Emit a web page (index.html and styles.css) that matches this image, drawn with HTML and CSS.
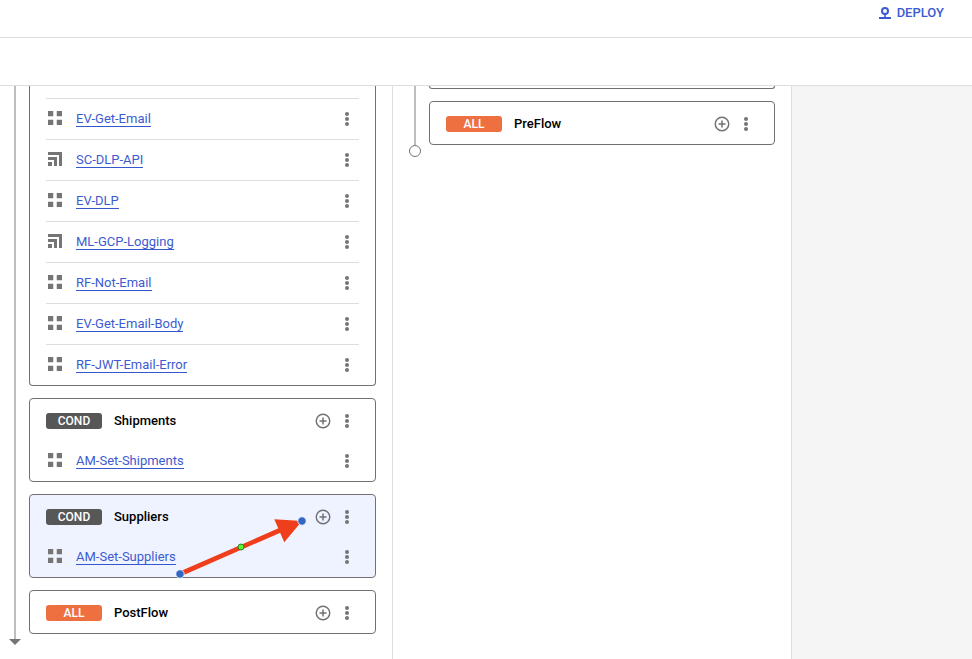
FILE: index.html
```html
<!DOCTYPE html>
<html lang="en">
<head>
<meta charset="utf-8">
<title>Proxy flows</title>
<link rel="stylesheet" href="styles.css">
</head>
<body>
<svg class="defs" aria-hidden="true">
  <symbol id="grid" viewBox="0 0 14 14"><path d="M0 0h5.250v5.250H0zM8.750 0H14v5.250H8.750zM0 8.750h5.250V14H0zM8.750 8.750H14V14H8.750z"/></symbol>
  <symbol id="callout" viewBox="0 0 14 14"><path d="M0 0h14v14h-3V3H0zM0 5h9v9H6V8H0zM0 10h4v4H0z"/></symbol>
  <symbol id="more" viewBox="0 0 6 14"><circle cx="3" cy="2" r="2"/><circle cx="3" cy="7" r="2"/><circle cx="3" cy="12" r="2"/></symbol>
  <symbol id="add" viewBox="0 0 16 16"><circle cx="8" cy="8" r="6.750" fill="none" stroke="currentColor" stroke-width="1.450"/><path d="M7.250 4.500h1.500v2.750h2.750v1.500H8.750v2.750h-1.500V8.750H4.500v-1.500h2.750z"/></symbol>
</svg>
<header class="topbar">
  <a class="deploy"><svg class="deploy-icon" viewBox="0 0 12 12"><circle cx="6" cy="4" r="3" fill="none" stroke="currentColor" stroke-width="2"/><path d="M5.200 7h1.600v3H12v2H0v-2h5.200z"/></svg>DEPLOY</a>
</header>
<div class="toolbar"></div>
<main class="canvas">
  <section class="column column-left">
    <div class="rail rail-down"></div>
    <div class="flows">
      <article class="card card-clipped">
        <div class="step"><svg class="kind"><use href="#grid"/></svg><a>EV-Get-Email</a><svg class="more"><use href="#more"/></svg></div>
        <div class="step"><svg class="kind"><use href="#callout"/></svg><a>SC-DLP-API</a><svg class="more"><use href="#more"/></svg></div>
        <div class="step"><svg class="kind"><use href="#grid"/></svg><a>EV-DLP</a><svg class="more"><use href="#more"/></svg></div>
        <div class="step"><svg class="kind"><use href="#callout"/></svg><a>ML-GCP-Logging</a><svg class="more"><use href="#more"/></svg></div>
        <div class="step"><svg class="kind"><use href="#grid"/></svg><a>RF-Not-Email</a><svg class="more"><use href="#more"/></svg></div>
        <div class="step"><svg class="kind"><use href="#grid"/></svg><a>EV-Get-Email-Body</a><svg class="more"><use href="#more"/></svg></div>
        <div class="step"><svg class="kind"><use href="#grid"/></svg><a>RF-JWT-Email-Error</a><svg class="more"><use href="#more"/></svg></div>
      </article>
      <article class="card">
        <div class="head"><span class="badge">COND</span><b>Shipments</b><svg class="add"><use href="#add"/></svg><svg class="more"><use href="#more"/></svg></div>
        <div class="step first"><svg class="kind"><use href="#grid"/></svg><a>AM-Set-Shipments</a><svg class="more"><use href="#more"/></svg></div>
      </article>
      <article class="card selected">
        <div class="head"><span class="badge">COND</span><b>Suppliers</b><svg class="add"><use href="#add"/></svg><svg class="more"><use href="#more"/></svg></div>
        <div class="step first"><svg class="kind"><use href="#grid"/></svg><a>AM-Set-Suppliers</a><svg class="more"><use href="#more"/></svg></div>
        <svg class="arrow" viewBox="170 510 140 74">
          <path d="M180 574L284 528.500" stroke="#ee3e1b" stroke-width="4.800"/>
          <path d="M274.300 519.200L302 521L284.300 542.300z" fill="#ee3e1b"/>
          <circle cx="180" cy="574" r="4.200" fill="#3367c6" stroke="#fff" stroke-width=".8"/>
          <circle cx="302" cy="521" r="4.200" fill="#3367c6" stroke="#fff" stroke-width=".8"/>
          <circle cx="241" cy="547" r="3" fill="#55f52f" stroke="#31701d" stroke-width=".9"/>
        </svg>
      </article>
      <article class="card">
        <div class="head"><span class="badge all">ALL</span><b>PostFlow</b><svg class="add"><use href="#add"/></svg><svg class="more"><use href="#more"/></svg></div>
      </article>
    </div>
  </section>
  <section class="column column-right">
    <div class="rail rail-end"></div>
    <div class="flows">
      <article class="card card-tail"></article>
      <article class="card">
        <div class="head"><span class="badge all">ALL</span><b>PreFlow</b><svg class="add"><use href="#add"/></svg><svg class="more"><use href="#more"/></svg></div>
      </article>
    </div>
  </section>
</main>
</body>
</html>
```
FILE: styles.css
```css
*, *::after { box-sizing: border-box; }
body {
  margin: 0;
  height: 659px;
  display: flex;
  flex-direction: column;
  overflow: hidden;
  background: #fff;
  color: #000;
  font: 13px/16px Roboto, sans-serif;
}
svg { display: block; fill: currentColor; flex: none; }
.defs { position: absolute; width: 0; height: 0; }
.topbar {
  height: 38px;
  flex: none;
  display: flex;
  justify-content: flex-end;
  padding: 5px 28px 0 0;
  border-bottom: 1px solid #dedede;
}
.deploy {
  display: flex;
  gap: 6px;
  height: 16px;
  color: #3d5bd0;
  font-weight: 500;
}
.deploy-icon { width: 12px; height: 12px; margin-top: 2px; }
.toolbar { height: 48px; flex: none; border-bottom: 1px solid #dedede; }
.canvas { flex: 1; display: flex; background: #f5f5f5; min-height: 0; }
.column {
  display: flex;
  background: #fff;
  border-right: 1px solid #dedede;
  padding-right: 16px;
}
.column-left { width: 393px; padding-left: 14px; }
.column-right { width: 399px; padding-left: 21px; }
.rail { position: relative; width: 2px; background: #bdbdbd; flex: none; }
.rail-down { height: 553px; margin-right: 13px; }
.rail-down::after {
  content: "";
  position: absolute;
  left: -5px;
  bottom: -6px;
  border: 6px solid transparent;
  border-top-color: #757575;
  border-bottom: 0;
}
.rail-end { height: 59px; margin-right: 13px; }
.rail-end::after {
  content: "";
  position: absolute;
  left: -5px;
  top: 59px;
  width: 12px;
  height: 12px;
  border: 1px solid #757575;
  border-radius: 50%;
}
.flows { flex: 1; display: flex; flex-direction: column; gap: 12px; }
.card {
  position: relative;
  border: 1px solid #717175;
  border-radius: 4px;
  padding: 0 16px;
}
.card-clipped { border-top: 0; border-radius: 0 0 4px 4px; padding-top: 12px; }
.card-tail { height: 3px; border-top: 0; border-radius: 0 0 4px 4px; }
.selected { background: #eff3ff; }
.head { display: flex; align-items: center; height: 42px; padding: 2px 9px 0 0; }
.head b { flex: 1; margin-left: 12px; font-weight: 500; }
.badge {
  width: 56px;
  height: 16px;
  border-radius: 3px;
  background: #575757;
  color: #fff;
  font-size: 12px;
  font-weight: 500;
  text-align: center;
}
.all { background: #ee7041; }
.add { width: 16px; height: 16px; margin-right: 13px; color: #717175; }
.more { width: 6px; height: 14px; color: #757575; }
.step {
  display: flex;
  align-items: center;
  height: 41px;
  border-top: 1px solid #dedede;
  padding: 0 9px 0 2px;
}
.step.first { height: 40px; border-top: 0; }
.kind { width: 14px; height: 14px; margin: -2px 14px 0 0; color: #757575; }
.step a { height: 16px; color: #3d5bd0; border-bottom: 1px solid #3457cd; }
.step .more { margin-left: auto; }
.arrow { position: absolute; left: 140px; top: 15px; width: 140px; height: 74px; z-index: 1; }
```
